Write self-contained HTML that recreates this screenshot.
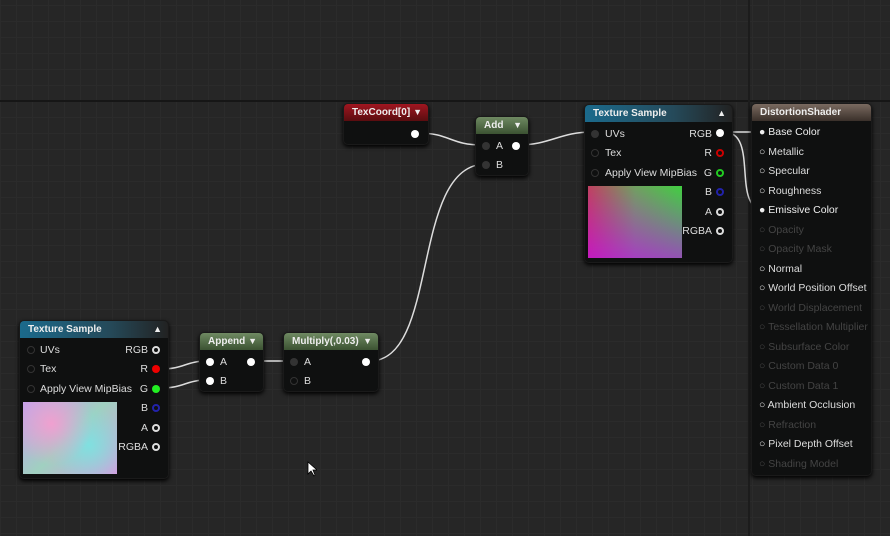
<!DOCTYPE html><html><head><style>
body{margin:0;width:890px;height:536px;overflow:hidden;background:#262626;font-family:"Liberation Sans",sans-serif;font-size:10px;color:#ddd;position:relative}
.bg{position:absolute;inset:0;background-image:linear-gradient(#2b2b2b 1px,transparent 1px),linear-gradient(90deg,#2b2b2b 1px,transparent 1px);background-size:16px 16px;background-position:0 5px}
.n{position:absolute;background:#0f1010;border-radius:5px;box-shadow:0 2px 4px #000;border:1px solid #1a1a1a}
.h{height:17px;border-radius:4px 4px 0 0;font-weight:bold;color:#eee;padding-left:8px;line-height:17px;font-size:10px;position:relative}
.h .a{position:absolute;right:6px;top:0;font-size:9px}
.t{position:absolute;font-size:10.5px;white-space:nowrap}
.p{position:absolute;width:8px;height:8px;border-radius:50%;box-sizing:border-box}
.f{background:#fff}.o{border:2px solid #ddd}.d{background:#333}.e{border:1px solid #333}
</style></head><body><div class="bg"></div>
<div style="position:absolute;left:0;right:0;top:100px;height:2px;background:#161616"></div>
<div style="position:absolute;top:0;bottom:0;left:748px;width:2px;background:#1c1c1c"></div>
<svg style="position:absolute;left:0;top:0" width="890" height="536" fill="none" stroke="#ddd" stroke-width="1.5">
<path d="M418 133 C450 133 450 145 482 145"/>
<path d="M518 145 C550 145 560 132 592 132"/>
<path d="M370 361 C440 361 410 164 486 164"/>
<path d="M160 369 C185 369 185 361 208 361"/>
<path d="M160 388 C185 388 185 380 208 380"/>
<path d="M254 361 L292 361"/>
<path d="M724 132 C760 132 730 210 765 210"/>
<path d="M724 132 L760 132"/>
</svg>
<div class="n" style="left:343px;top:103px;width:84px;height:40px"><div class="h" style="background:linear-gradient(#a01620,#5a0d10)">TexCoord[0]<span class="a">▼</span></div><div class="p f" style="left:67px;top:26px"></div></div>
<div class="n" style="left:475px;top:116px;width:52px;height:58px"><div class="h" style="background:linear-gradient(#6f8a62,#3b5232)">Add<span class="a">▼</span></div>
<div class="p d" style="left:6px;top:25px"></div><div class="t" style="left:20px;top:23px">A</div><div class="p f" style="left:36px;top:25px"></div>
<div class="p d" style="left:6px;top:44px"></div><div class="t" style="left:20px;top:42px">B</div></div>
<div class="n" style="left:584px;top:104px;width:147px;height:157px"><div class="h" style="background:linear-gradient(90deg,#1b6a8c,#254a5a 60%,#222)">Texture Sample<span class="a">▲</span></div>
<div class="p d" style="left:6px;top:25px"></div><div class="t" style="left:20px;top:23px">UVs</div>
<div class="p e" style="left:6px;top:44px"></div><div class="t" style="left:20px;top:42px">Tex</div>
<div class="p e" style="left:6px;top:64px"></div><div class="t" style="left:20px;top:62px">Apply View MipBias</div>
<div class="t" style="right:20px;top:23px">RGB</div><div class="p f" style="left:131px;top:24px"></div>
<div class="t" style="right:20px;top:42px">R</div><div class="p o" style="left:131px;top:44px;border-color:#c00"></div>
<div class="t" style="right:20px;top:62px">G</div><div class="p o" style="left:131px;top:64px;border-color:#2c2"></div>
<div class="t" style="right:20px;top:81px">B</div><div class="p o" style="left:131px;top:83px;border-color:#22a"></div>
<div class="t" style="right:20px;top:101px">A</div><div class="p o" style="left:131px;top:103px"></div>
<div class="t" style="right:20px;top:120px">RGBA</div><div class="p o" style="left:131px;top:122px"></div>
<div style="position:absolute;left:3px;top:81px;width:94px;height:72px;background:linear-gradient(to bottom,transparent,rgba(200,0,255,.6)),linear-gradient(90deg,#c04060,#70a060,#40d040)"></div></div>
<div class="n" style="left:751px;top:103px;width:119px;height:371px"><div class="h" style="background:linear-gradient(#7a6a60,#3a302a)">DistortionShader</div>
<div style="position:absolute;left:7px;top:19px;line-height:19.5px;font-size:10.5px">
<div style="color:#eee">● Base Color</div><div>○ Metallic</div><div>○ Specular</div><div>○ Roughness</div><div style="color:#eee">● Emissive Color</div>
<div style="color:#444">○ Opacity</div><div style="color:#444">○ Opacity Mask</div><div>○ Normal</div><div>○ World Position Offset</div>
<div style="color:#444">○ World Displacement</div><div style="color:#444;white-space:nowrap">○ Tessellation Multiplier</div><div style="color:#444">○ Subsurface Color</div><div style="color:#444">○ Custom Data 0</div><div style="color:#444">○ Custom Data 1</div>
<div>○ Ambient Occlusion</div><div style="color:#444">○ Refraction</div><div>○ Pixel Depth Offset</div><div style="color:#444">○ Shading Model</div></div></div>
<div class="n" style="left:19px;top:320px;width:148px;height:157px"><div class="h" style="background:linear-gradient(90deg,#1b6a8c,#254a5a 60%,#222)">Texture Sample<span class="a">▲</span></div>
<div class="p e" style="left:7px;top:25px"></div><div class="t" style="left:20px;top:23px">UVs</div>
<div class="p e" style="left:7px;top:44px"></div><div class="t" style="left:20px;top:42px">Tex</div>
<div class="p e" style="left:7px;top:64px"></div><div class="t" style="left:20px;top:62px">Apply View MipBias</div>
<div class="t" style="right:20px;top:23px">RGB</div><div class="p o" style="left:132px;top:25px"></div>
<div class="t" style="right:20px;top:42px">R</div><div class="p" style="left:132px;top:44px;background:#e00"></div>
<div class="t" style="right:20px;top:62px">G</div><div class="p" style="left:132px;top:64px;background:#2e2"></div>
<div class="t" style="right:20px;top:81px">B</div><div class="p o" style="left:132px;top:83px;border-color:#22a"></div>
<div class="t" style="right:20px;top:101px">A</div><div class="p o" style="left:132px;top:103px"></div>
<div class="t" style="right:20px;top:120px">RGBA</div><div class="p o" style="left:132px;top:122px"></div>
<div style="position:absolute;left:3px;top:81px;width:94px;height:72px;background:radial-gradient(circle at 30% 30%,#f0a0d0,transparent 50%),radial-gradient(circle at 70% 60%,#80e0e0,transparent 50%),linear-gradient(135deg,#c0a0f0,#a0d0c0,#d0a0e0)"></div></div>
<div class="n" style="left:199px;top:332px;width:63px;height:58px"><div class="h" style="background:linear-gradient(#6f8a62,#3b5232)">Append<span class="a">▼</span></div>
<div class="p f" style="left:6px;top:25px"></div><div class="t" style="left:20px;top:23px">A</div><div class="p f" style="left:47px;top:25px"></div>
<div class="p f" style="left:6px;top:44px"></div><div class="t" style="left:20px;top:42px">B</div></div>
<div class="n" style="left:283px;top:332px;width:94px;height:58px"><div class="h" style="background:linear-gradient(#6f8a62,#3b5232)">Multiply(,0.03)<span class="a">▼</span></div>
<div class="p d" style="left:6px;top:25px"></div><div class="t" style="left:20px;top:23px">A</div><div class="p f" style="left:78px;top:25px"></div>
<div class="p e" style="left:6px;top:44px"></div><div class="t" style="left:20px;top:42px">B</div></div>
<svg style="position:absolute;left:307px;top:461px" width="10" height="16"><path d="M1 1 L1 13 L4 10 L7 15 L8 14 L6 9 L10 9 Z" fill="#fff" stroke="#000" stroke-width="0.8"/></svg>
</body></html>
